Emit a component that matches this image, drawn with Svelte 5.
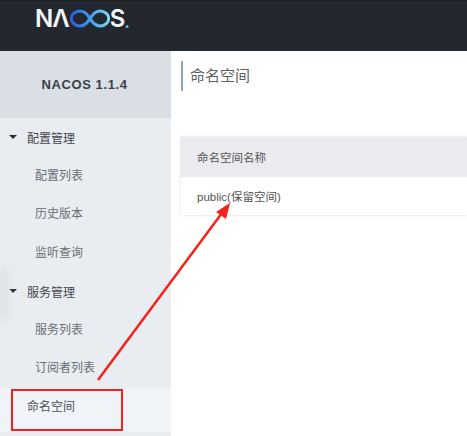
<script lang="ts">
  const groups = [
    { title: '配置管理', items: ['配置列表', '历史版本', '监听查询'] },
    { title: '服务管理', items: ['服务列表', '订阅者列表'] }
  ];
</script>

<div class="page">
  <header class="top">
    <div class="logo" aria-label="NACOS.">
      <span class="n">N</span><span class="lambda">Λ</span>
      <svg class="infinity" viewBox="0 0 46 19" width="42" height="19" preserveAspectRatio="none" aria-hidden="true">
        <defs>
          <linearGradient id="inf" x1="0" x2="1" y1="0" y2="0">
            <stop offset="0" stop-color="#2a62e0" />
            <stop offset="0.5" stop-color="#3f9bf0" />
            <stop offset="1" stop-color="#7fd6f4" />
          </linearGradient>
        </defs>
        <path
          d="M23 9.500C20 5.500 17.500 2 12 2a9.500 7.500 0 0 0 0 15c5.500 0 8-3.500 11-7.500s5.500-7.500 11-7.500a9.500 7.500 0 0 1 0 15c-5.500 0-8-3.500-11-7.500z"
          fill="none"
          stroke="url(#inf)"
          stroke-width="3.200"
        />
      </svg>
      <span class="s">S</span><span class="dot">.</span>
    </div>
  </header>

  <div class="body">
    <aside class="side">
      <div class="version">NACOS 1.1.4</div>
      <nav>
        {#each groups as g}
          <div class="group">
            <span class="caret"></span>
            {g.title}
          </div>
          {#each g.items as item}
            <div class="item">{item}</div>
          {/each}
        {/each}
        <div class="single">命名空间</div>
      </nav>
    </aside>

    <main class="content">
      <h1 class="title">命名空间</h1>
      <div class="table">
        <div class="thead">命名空间名称</div>
        <div class="row">public(保留空间)</div>
      </div>
    </main>
  </div>

  <!-- annotation and capture smudge lying over the screenshot -->
  <div class="smudge"></div>
  <div class="redbox"></div>
  <svg class="arrow" width="467" height="436" viewBox="0 0 467 436" aria-hidden="true">
    <line x1="98" y1="380" x2="222" y2="213" stroke="#f5221a" stroke-width="2.500" />
    <polygon points="230,203 226,219 216,212" fill="#f5221a" />
  </svg>
</div>

<style>
  :global(body) {
    margin: 0;
    background: #fff;
  }

  .page {
    position: relative;
    width: 467px;
    height: 436px;
    overflow: hidden;
    font-family: "Liberation Sans", "Noto Sans CJK SC", sans-serif;
    color: #555;
  }

  .top {
    height: 51px;
    box-sizing: border-box;
    background: #23272f;
    border-top: 1px solid #1b1d22;
    padding: 7px 0 0 35px;
  }

  .logo {
    display: flex;
    align-items: center;
    height: 21px;
    font-family: "Inter", sans-serif;
    font-size: 24px;
    font-weight: 600;
    line-height: 21px;
    color: #f4f6f8;
  }

  .n {
    letter-spacing: -1px;
  }

  .lambda {
    letter-spacing: -1px;
  }

  .infinity {
    flex: none;
    margin: 0 -1px 0 0;
  }

  .dot {
    color: #5fd0d8;
    font-size: 18px;
    margin: 5px 0 0 -1px;
  }

  .body {
    display: flex;
    height: 385px;
  }

  .side {
    width: 171px;
    flex: none;
    background: #e9edf2;
  }

  .version {
    height: 67px;
    display: flex;
    align-items: center;
    justify-content: center;
    padding-right: 2px;
    background: #d9dfe5;
    font-size: 13px;
    font-weight: 700;
    letter-spacing: 0.6px;
    color: #3a3f4a;
  }

  .group {
    height: 38.500px;
    display: flex;
    align-items: center;
    padding-left: 9px;
    font-size: 12px;
    color: #44474d;
  }

  .caret {
    width: 0;
    height: 0;
    margin-right: 10px;
    border-left: 4px solid transparent;
    border-right: 4px solid transparent;
    border-top: 4px solid #2c2e33;
  }

  .item {
    height: 38.500px;
    line-height: 38.500px;
    padding-left: 35px;
    font-size: 12px;
    color: #6b6e74;
  }

  .single {
    height: 44px;
    line-height: 38.500px;
    padding-left: 27px;
    font-size: 12px;
    color: #4c4f55;
    background: #f0f3f8;
  }

  .content {
    flex: 1;
    min-width: 0;
  }

  .title {
    margin: 10px 0 0 10px;
    height: 30px;
    line-height: 30px;
    padding-left: 7px;
    border-left: 2px solid #8fa6c2;
    font-size: 15px;
    font-weight: 400;
    color: #5d5f63;
  }

  .table {
    margin: 46px 0 0 10px;
    box-shadow: 0 0 3px rgba(0, 0, 0, 0.15);
  }

  .thead {
    height: 40px;
    line-height: 42px;
    padding-left: 16px;
    background: #ebebef;
    font-size: 11.500px;
    color: #555;
  }

  .row {
    height: 38px;
    line-height: 40px;
    padding-left: 16px;
    background: #fff;
    font-size: 11.500px;
    color: #555;
  }

  .smudge {
    position: absolute;
    left: 0;
    top: 268px;
    width: 8px;
    height: 54px;
    background: #e0e1e4;
    filter: blur(3px);
  }

  .redbox {
    position: absolute;
    left: 11px;
    top: 389px;
    width: 112px;
    height: 42px;
    box-sizing: border-box;
    border: 2.500px solid #f5221a;
  }

  .arrow {
    position: absolute;
    left: 0;
    top: 0;
    pointer-events: none;
  }
</style>
